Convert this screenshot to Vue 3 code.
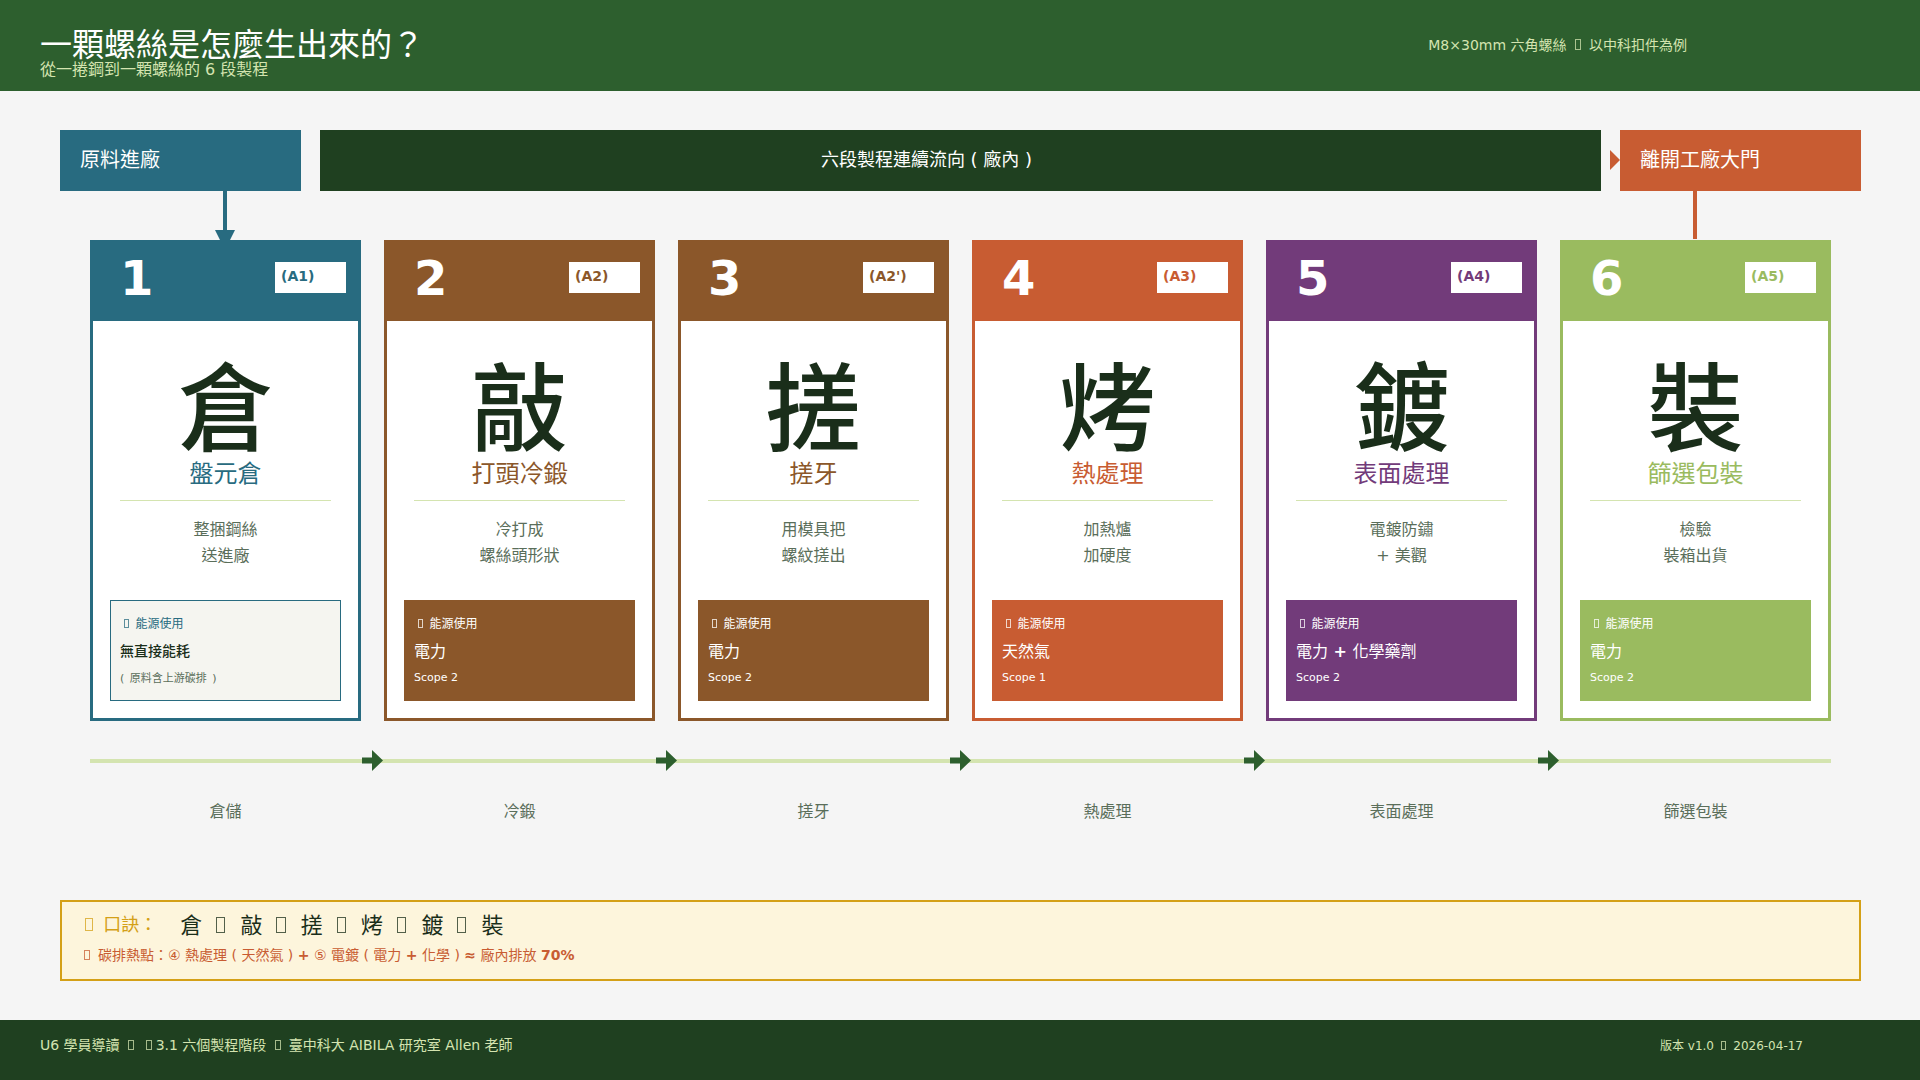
<template>
  <div class="page">
    <header class="top-bar">
      <div class="titles">
        <h1>一顆螺絲是怎麼生出來的？</h1>
        <p>從一捲鋼到一顆螺絲的 6 段製程</p>
      </div>
      <div class="top-note">M8×30mm 六角螺絲 <i class="tofu"></i> 以中科扣件為例</div>
    </header>

    <main class="content">
      <div class="flow-row">
        <div class="flow-box in">原料進廠</div>
        <div class="flow-box mid">六段製程連續流向 ( 廠內 )</div>
        <div class="flow-box out">
          <span class="out-arrow"></span>
          離開工廠大門
        </div>
      </div>

      <div class="cards">
        <span class="link link-in"></span>
        <span class="link link-out"></span>
        <section v-for="s in steps" :key="s.no" class="card" :style="{ '--c': s.color }">
          <div class="card-head">
            <span class="no">{{ s.no }}</span>
            <span class="badge">{{ s.code }}</span>
          </div>
          <div class="card-body">
            <div class="big">{{ s.char }}</div>
            <div class="name">{{ s.name }}</div>
            <div class="rule"></div>
            <div class="desc">
              <div v-for="d in s.desc" :key="d">{{ d }}</div>
            </div>
            <div class="energy" :class="{ plain: s.plain }">
              <div class="energy-label"><i class="tofu"></i> 能源使用</div>
              <div class="energy-main">
                <template v-for="(part, i) in s.energy" :key="part">
                  <b v-if="i > 0"> + </b>{{ part }}
                </template>
              </div>
              <div class="energy-scope">{{ s.scope }}</div>
            </div>
          </div>
        </section>
      </div>

      <div class="track">
        <svg v-for="n in 5" :key="n" class="track-arrow" width="21" height="21" viewBox="0 0 21 21">
          <path d="M0 7.5h10V0l11 10.5L10 21v-7.5H0z" />
        </svg>
      </div>
      <div class="labels">
        <span v-for="s in steps" :key="s.no">{{ s.short }}</span>
      </div>

      <div class="mnemonic">
        <div class="mn-line">
          <span class="mn-key"><i class="tofu"></i> 口訣：</span>
          <span class="mn-chars">
            <template v-for="(s, i) in steps" :key="s.no">
              <i v-if="i > 0" class="tofu"></i>{{ s.char }}
            </template>
          </span>
        </div>
        <div class="mn-hot"><i class="tofu"></i> 碳排熱點：④ 熱處理 ( 天然氣 ) <b>+</b> ⑤ 電鍍 ( 電力 <b>+</b> 化學 ) <b>≈</b> 廠內排放 <b>70%</b></div>
      </div>
    </main>

    <footer class="bottom-bar">
      <span>U6 學員導讀 <i class="tofu"></i> <i class="tofu"></i>3.1 六個製程階段 <i class="tofu"></i> 臺中科大 AIBILA 研究室 Allen 老師</span>
      <span class="version">版本 v1.0 <i class="tofu"></i> 2026-04-17</span>
    </footer>
  </div>
</template>

<script setup>
const steps = [
  { no: 1, code: "(A1)", char: "倉", name: "盤元倉", desc: ["整捆鋼絲", "送進廠"], energy: ["無直接能耗"], scope: "( 原料含上游碳排 )", short: "倉儲", color: "#286b80", plain: true },
  { no: 2, code: "(A2)", char: "敲", name: "打頭冷鍛", desc: ["冷打成", "螺絲頭形狀"], energy: ["電力"], scope: "Scope 2", short: "冷鍛", color: "#8b572a" },
  { no: 3, code: "(A2')", char: "搓", name: "搓牙", desc: ["用模具把", "螺紋搓出"], energy: ["電力"], scope: "Scope 2", short: "搓牙", color: "#8b572a" },
  { no: 4, code: "(A3)", char: "烤", name: "熱處理", desc: ["加熱爐", "加硬度"], energy: ["天然氣"], scope: "Scope 1", short: "熱處理", color: "#c85c32" },
  { no: 5, code: "(A4)", char: "鍍", name: "表面處理", desc: ["電鍍防鏽", "+ 美觀"], energy: ["電力", "化學藥劑"], scope: "Scope 2", short: "表面處理", color: "#723b7a" },
  { no: 6, code: "(A5)", char: "裝", name: "篩選包裝", desc: ["檢驗", "裝箱出貨"], energy: ["電力"], scope: "Scope 2", short: "篩選包裝", color: "#9abb5f" },
];
</script>

<style>
body {
  background: #f5f5f5;
}
</style>

<style scoped>
.page {
  width: 1920px;
  height: 1080px;
  display: flex;
  flex-direction: column;
  overflow: hidden;
  background: #f5f5f5;
  font-family: "DejaVu Sans", "Noto Sans CJK TC", sans-serif;
}

/* stand-in for the missing-glyph box of the original */
.tofu {
  display: inline-block;
  width: 0.42em;
  height: 0.72em;
  margin: 0 0.25em 0 0.3em;
  box-sizing: border-box;
  border: 1px solid currentColor;
  opacity: 0.75;
}

.top-bar {
  height: 91px;
  flex-shrink: 0;
  display: flex;
  justify-content: space-between;
  align-items: center;
  padding: 0 233px 0 40px;
  box-sizing: border-box;
  background: #2d5f2e;
}

.titles {
  padding-top: 16px;
}

.titles h1 {
  margin: 0;
  font-size: 32px;
  line-height: 34px;
  font-weight: 400;
  color: #fff;
}

.titles p {
  margin: -2px 0 0;
  font-size: 16px;
  line-height: 20px;
  color: #d4e4b0;
}

.top-note {
  padding-bottom: 4px;
  font-size: 14px;
  color: #d4e4b0;
}

.content {
  flex: 1;
  padding: 39px 59px 0 60px;
}

.flow-row {
  display: flex;
  gap: 19px;
  height: 61px;
}

.flow-box {
  position: relative;
  width: 241px;
  display: flex;
  align-items: center;
  padding: 0 0 4px 20px;
  box-sizing: border-box;
  font-size: 20px;
  color: #fff;
}

.flow-box.in {
  background: #286b80;
}

.flow-box.mid {
  flex: 1;
  justify-content: center;
  padding: 0 68px 6px 0;
  font-size: 18px;
  background: #1f4020;
}

.flow-box.out {
  background: #c85c32;
}

.out-arrow {
  position: absolute;
  left: -10px;
  top: 20px;
  border-style: solid;
  border-width: 10px 0 10px 10px;
  border-color: transparent transparent transparent #c85c32;
}

.cards {
  position: relative;
  display: flex;
  gap: 23px;
  margin: 49px 30px 0;
}

.link {
  position: absolute;
  bottom: 100%;
  width: 4px;
  height: 49px;
}

.link-in {
  left: 133px;
  background: #286b80;
}

.link-in::after {
  content: "";
  position: absolute;
  left: -8px;
  bottom: -10px;
  border-style: solid;
  border-width: 20px 10px 0;
  border-color: #286b80 transparent transparent;
}

.link-out {
  right: 134px;
  bottom: calc(100% + 1px);
  height: 48px;
  background: #c85c32;
}

.card {
  position: relative;
  width: 271px;
  height: 481px;
  box-sizing: border-box;
  border: 3px solid var(--c);
  background: #fff;
}

.card-head {
  height: 81px;
  margin: -3px -3px 0;
  box-sizing: border-box;
  display: flex;
  justify-content: space-between;
  padding: 13px 15px 0 30px;
  background: var(--c);
}

.no {
  font-size: 48px;
  line-height: 50px;
  font-weight: 700;
  color: #fff;
}

.badge {
  width: 71px;
  height: 31px;
  margin-top: 9px;
  padding-left: 6px;
  box-sizing: border-box;
  font-size: 14px;
  line-height: 28px;
  font-weight: 700;
  color: var(--c);
  background: #fff;
}

.card-body {
  display: flex;
  flex-direction: column;
  align-items: center;
  text-align: center;
}

.big {
  margin-top: 39px;
  font-size: 96px;
  line-height: 100px;
  font-weight: 500;
  color: #1a2e1a;
}

.name {
  margin-top: -1px;
  font-size: 24px;
  line-height: 30px;
  color: var(--c);
}

.rule {
  width: 211px;
  height: 1px;
  margin-top: 11px;
  background: #d4e4b0;
}

.desc {
  margin-top: 16px;
  font-size: 16px;
  line-height: 26px;
  color: #5a6e5a;
}

.energy {
  align-self: flex-start;
  width: 231px;
  height: 101px;
  margin: 31px 0 0 17px;
  padding: 14px 10px 0;
  box-sizing: border-box;
  text-align: left;
  color: #fff;
  background: var(--c);
}

.energy-label {
  font-size: 12px;
  line-height: 20px;
}

.energy-main {
  margin-top: 7px;
  font-size: 16px;
  line-height: 22px;
}

.energy-scope {
  margin-top: 7px;
  font-size: 11px;
  line-height: 16px;
}

.energy.plain {
  border: 1px solid var(--c);
  padding: 13px 9px 0;
  color: #1a2e1a;
  background: #f5f5f0;
}

.energy.plain .energy-label {
  color: var(--c);
}

.energy.plain .energy-main {
  margin-top: 6px;
  font-size: 14px;
  font-weight: 500;
}

.energy.plain .energy-scope {
  margin-top: 9px;
  word-spacing: 2px;
  color: #5a6e5a;
}

.track {
  position: relative;
  height: 4px;
  margin: 38px 30px 0;
  display: flex;
  gap: 273px;
  padding-left: 272px;
  background: #d4e4b0;
}

.track-arrow {
  flex-shrink: 0;
  margin-top: -9px;
  fill: #2d5f2e;
}

.labels {
  display: flex;
  gap: 23px;
  margin: 39px 30px 0;
}

.labels span {
  width: 271px;
  text-align: center;
  font-size: 16px;
  line-height: 20px;
  color: #5a6e5a;
}

.mnemonic {
  height: 81px;
  margin-top: 78px;
  padding: 5px 18px 0;
  box-sizing: border-box;
  border: 2px solid #d4a017;
  background: #fdf5dc;
}

.mn-line {
  display: flex;
  align-items: center;
  gap: 23px;
}

.mn-key {
  font-size: 18px;
  color: #d4a017;
}

.mn-chars {
  font-size: 22px;
  letter-spacing: 2px;
  color: #1a2e1a;
}

.mn-chars .tofu {
  margin: 0 15px 0 12px;
}

.mn-hot {
  margin-top: 5px;
  font-size: 14px;
  color: #c85c32;
}

.bottom-bar {
  height: 60px;
  flex-shrink: 0;
  display: flex;
  justify-content: space-between;
  align-items: center;
  padding: 0 117px 12px 40px;
  box-sizing: border-box;
  font-size: 14px;
  color: #d4e4b0;
  background: #1f4020;
}

.version {
  font-size: 12px;
}
</style>
